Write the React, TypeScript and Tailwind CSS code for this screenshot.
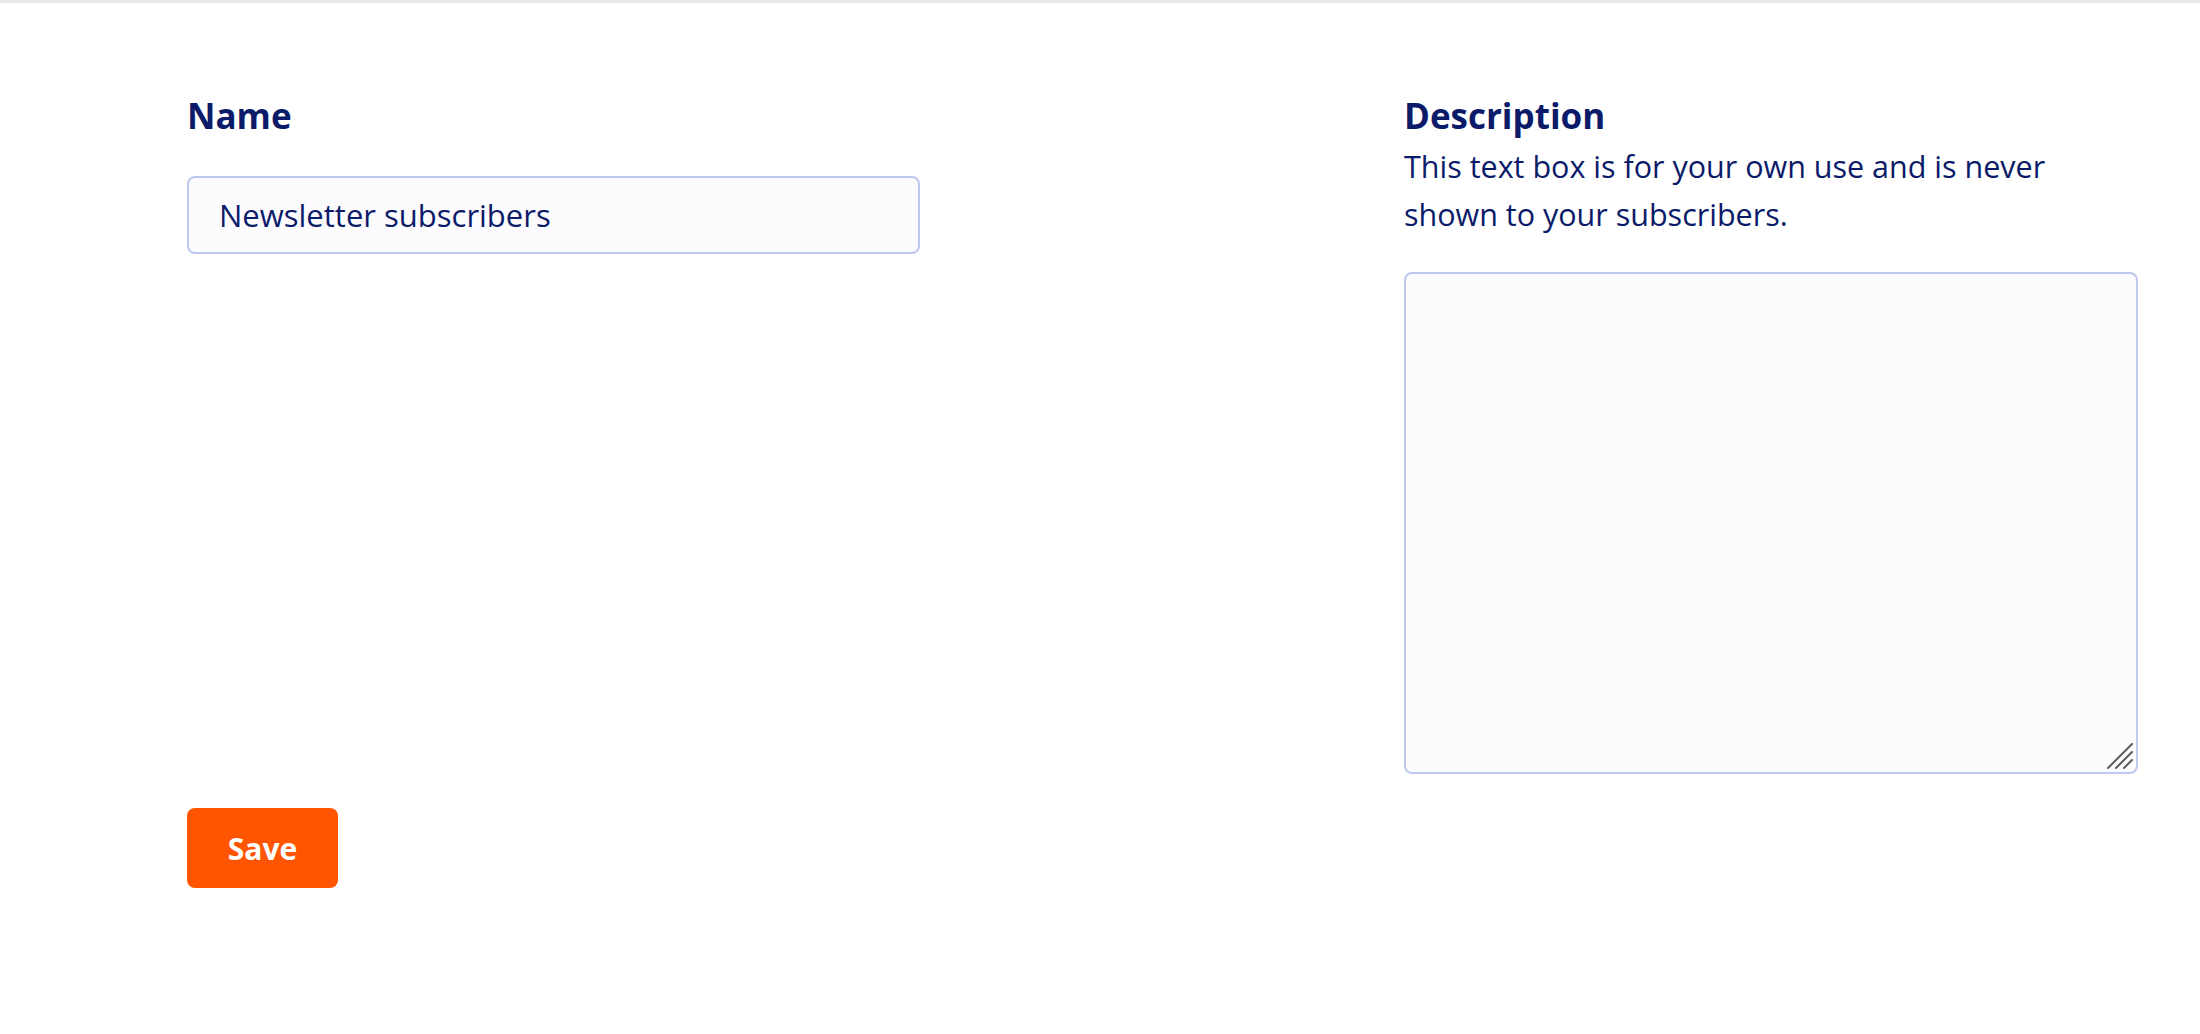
import React from "react";

export default function App() {
  return (
    <div
      className="min-h-screen w-full bg-white text-[#0c1b69]"
      style={{ fontFamily: '"Open Sans", "Noto Sans", sans-serif' }}
    >
      <div className="h-[3px] w-full bg-[#e9e9eb]" />
      <div className="pl-[187px] pt-[90px]">
        <div className="grid w-[1951px] grid-cols-[733px_734px] gap-x-[484px]">
          <div className="flex flex-col">
            <label className="text-[35px] font-bold leading-[46px]">Name</label>
            <input
              type="text"
              defaultValue="Newsletter subscribers"
              className="mt-[37px] h-[78px] w-full rounded-[8px] border-2 border-[#bfc8ef] bg-[#fcfcff] pl-[30px] text-[31px] text-[#0c1b69] outline-none"
            />
          </div>
          <div className="flex flex-col">
            <label className="text-[35px] font-bold leading-[46px]">Description</label>
            <p className="mt-[3px] max-w-[690px] text-[30.5px] leading-[48px]">
              This text box is for your own use and is never shown to your subscribers.
            </p>
            <div className="relative mt-[34px]">
              <textarea className="block h-[502px] w-full resize-none rounded-[8px] border-2 border-[#bfc8ef] bg-[#fcfcff] p-4 text-[30px] text-[#0c1b69] outline-none" />
              <svg
                className="pointer-events-none absolute bottom-[5px] right-[5px]"
                width="26"
                height="26"
                viewBox="0 0 26 26"
              >
                <g stroke="#5c5c5c" strokeWidth="2" strokeLinecap="round">
                  <line x1="1" y1="25" x2="25" y2="1" />
                  <line x1="9" y1="25" x2="25" y2="9" />
                  <line x1="17" y1="25" x2="25" y2="17" />
                </g>
              </svg>
            </div>
          </div>
        </div>
        <button
          type="button"
          className="mt-[34px] flex h-[80px] w-[151px] items-center justify-center rounded-[8px] bg-[#ff5400] text-[30px] font-bold text-white"
        >
          Save
        </button>
      </div>
    </div>
  );
}
